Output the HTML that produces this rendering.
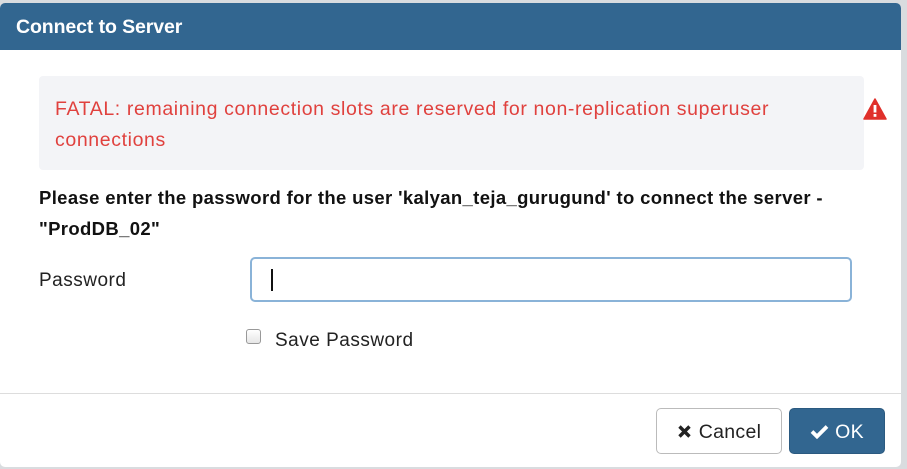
<!DOCTYPE html>
<html><head><meta charset="utf-8"><style>
*{box-sizing:border-box;margin:0;padding:0}
body{width:907px;height:469px;background:#d9dcdf;font-family:"Liberation Sans",sans-serif;position:relative;overflow:hidden}
.dlg{position:absolute;left:0;top:3px;width:901px;height:464px;background:#fff;border-radius:5px;overflow:hidden}
.hd{height:47px;background:#326690;color:#fff;font-weight:bold;font-size:19.5px;padding:13px 0 0 16px;letter-spacing:-0.1px}
.alert{position:absolute;left:39px;top:73px;width:825px;height:94px;background:#f3f4f7;border-radius:4px;color:#e0413e;font-size:19.5px;letter-spacing:0.62px;line-height:31px;padding:18px 16px;white-space:nowrap}
.warn{position:absolute;left:863px;top:95px}
.msg{position:absolute;left:39px;top:179px;font-size:18.5px;letter-spacing:0.35px;font-weight:bold;line-height:31px;color:#111;white-space:nowrap}
.lbl{position:absolute;left:39px;top:267px;font-size:19px;letter-spacing:0.5px;color:#222}
.inp{position:absolute;left:250px;top:254px;width:602px;height:45px;border:2px solid #8ab3d8;border-radius:5px}
.caret{position:absolute;left:19px;top:10px;width:2px;height:22px;background:#111}
.cb{position:absolute;left:246px;top:326px;width:15px;height:15px;border:1px solid #999;border-radius:3px;background:linear-gradient(#fff,#e6e6e6)}
.cbl{position:absolute;left:275px;top:327px;font-size:19px;letter-spacing:0.5px;color:#222}
.ft{position:absolute;left:0;top:390px;width:901px;border-top:1px solid #ddd}
.btn{position:absolute;top:405px;height:46px;border-radius:5px;font-size:19.5px;letter-spacing:0.3px;line-height:46px;text-align:center}
.cancel{left:656px;width:126px;border:1px solid #bbb;color:#222;background:#fff}
.ok{left:789px;width:96px;background:#326690;color:#fff;border:1px solid #2b5a80}
</style></head><body>
<div class="dlg">
<div class="hd">Connect to Server</div>
<div class="alert">FATAL: remaining connection slots are reserved for non-replication superuser<br>connections</div>
<svg class="warn" width="24" height="22" viewBox="0 0 24 22"><path d="M12 1 L23 21 L1 21 Z" fill="#e0302b" stroke="#e0302b" stroke-linejoin="round" stroke-width="1.5"/><rect x="10.6" y="7" width="2.8" height="7.5" fill="#fff"/><rect x="10.6" y="16" width="2.8" height="2.8" fill="#fff"/></svg>
<div class="msg">Please enter the password for the user 'kalyan_teja_gurugund' to connect the server -<br>"ProdDB_02"</div>
<div class="lbl">Password</div>
<div class="inp"><div class="caret"></div></div>
<div class="cb"></div>
<div class="cbl">Save Password</div>
<div class="ft"></div>
<div class="btn cancel"><svg width="15" height="15" viewBox="0 0 15 15" style="vertical-align:-1px;margin-right:7px"><path d="M2.5 2.5L12.5 12.5M12.5 2.5L2.5 12.5" stroke="#222" stroke-width="3.4"/></svg>Cancel</div>
<div class="btn ok"><svg width="19" height="15" viewBox="0 0 19 15" style="vertical-align:-1px;margin-right:6px"><path d="M2 7.5L7 12.5L17 2.5" stroke="#fff" stroke-width="3.8" fill="none"/></svg>OK</div>
</div>
</body></html>
